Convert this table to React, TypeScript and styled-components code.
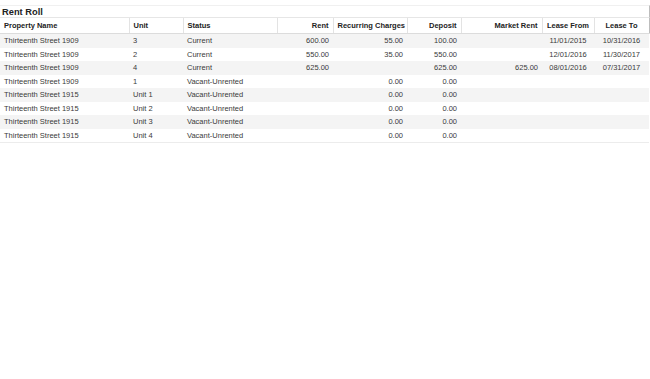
import React from 'react'
import styled, { createGlobalStyle } from 'styled-components'

const GlobalStyle = createGlobalStyle`
    html, body {
        margin: 0;
        padding: 0;
        background: #fff;
    }
    body {
        font-family: 'Liberation Sans', Arial, Helvetica, sans-serif;
        color: #333;
    }
`

const Page = styled.div`
    width: 650px;
    height: 379px;
    padding-top: 5px;
    box-sizing: border-box;
`

const TitleBar = styled.div`
    border-top: 1px solid #f0f0f0;
    border-bottom: 1px solid #e6e6e6;
    border-right: 1px solid #bdbdbd;
    width: 647px;
    height: 11px;
    padding-left: 2px;
    display: flex;
    align-items: center;
`

const Title = styled.h1`
    margin: 0;
    font-size: 9.3px;
    font-weight: bold;
    color: #222;
    line-height: 10px;
`

const Grid = styled.table`
    border-collapse: collapse;
    table-layout: fixed;
    width: 649px;
    font-size: 7.5px;
`

const HeadCell = styled.th<{ $align?: string }>`
    height: 15px;
    padding: 0 4px;
    font-weight: bold;
    color: #222;
    text-align: ${p => p.$align || 'left'};
    border-right: 1px solid #e3e3e3;
    border-bottom: 1px solid #dcdcdc;
    white-space: nowrap;
    overflow: hidden;
    &:last-child {
        border-right: 1px solid #bdbdbd;
    }
`

const Row = styled.tr<{ $shade: boolean }>`
    background: ${p => (p.$shade ? '#f4f4f4' : '#fff')};
    &:last-child td {
        border-bottom: 1px solid #ececec;
    }
`

const Cell = styled.td<{ $align?: string }>`
    height: 13.5px;
    padding: 0 4px;
    color: #3a3a3a;
    text-align: ${p => p.$align || 'left'};
    white-space: nowrap;
    overflow: hidden;
`

const columns = [
    { key: 'property', label: 'Property Name', width: 129, align: 'left' },
    { key: 'unit', label: 'Unit', width: 54, align: 'left' },
    { key: 'status', label: 'Status', width: 94, align: 'left' },
    { key: 'rent', label: 'Rent', width: 56, align: 'right' },
    { key: 'recurring', label: 'Recurring Charges', width: 74, align: 'right' },
    { key: 'deposit', label: 'Deposit', width: 54, align: 'right' },
    { key: 'market', label: 'Market Rent', width: 81, align: 'right' },
    { key: 'from', label: 'Lease From', width: 52, align: 'center' },
    { key: 'to', label: 'Lease To', width: 55, align: 'center' },
]

const rows: any[] = [
    { property: 'Thirteenth Street 1909', unit: '3', status: 'Current', rent: '600.00', recurring: '55.00', deposit: '100.00', market: '', from: '11/01/2015', to: '10/31/2016' },
    { property: 'Thirteenth Street 1909', unit: '2', status: 'Current', rent: '550.00', recurring: '35.00', deposit: '550.00', market: '', from: '12/01/2016', to: '11/30/2017' },
    { property: 'Thirteenth Street 1909', unit: '4', status: 'Current', rent: '625.00', recurring: '', deposit: '625.00', market: '625.00', from: '08/01/2016', to: '07/31/2017' },
    { property: 'Thirteenth Street 1909', unit: '1', status: 'Vacant-Unrented', rent: '', recurring: '0.00', deposit: '0.00', market: '', from: '', to: '' },
    { property: 'Thirteenth Street 1915', unit: 'Unit 1', status: 'Vacant-Unrented', rent: '', recurring: '0.00', deposit: '0.00', market: '', from: '', to: '' },
    { property: 'Thirteenth Street 1915', unit: 'Unit 2', status: 'Vacant-Unrented', rent: '', recurring: '0.00', deposit: '0.00', market: '', from: '', to: '' },
    { property: 'Thirteenth Street 1915', unit: 'Unit 3', status: 'Vacant-Unrented', rent: '', recurring: '0.00', deposit: '0.00', market: '', from: '', to: '' },
    { property: 'Thirteenth Street 1915', unit: 'Unit 4', status: 'Vacant-Unrented', rent: '', recurring: '0.00', deposit: '0.00', market: '', from: '', to: '' },
]

const App: React.FunctionComponent = () => {
    return (
        <Page>
            <GlobalStyle />
            <TitleBar>
                <Title>Rent Roll</Title>
            </TitleBar>
            <Grid>
                <colgroup>
                    {columns.map(c => <col key={c.key} style={{ width: c.width }} />)}
                </colgroup>
                <thead>
                    <tr>
                        {columns.map(c => <HeadCell key={c.key} $align={c.align}>{c.label}</HeadCell>)}
                    </tr>
                </thead>
                <tbody>
                    {rows.map((r, i) => (
                        <Row key={i} $shade={i % 2 === 0}>
                            {columns.map(c => <Cell key={c.key} $align={c.align}>{r[c.key]}</Cell>)}
                        </Row>
                    ))}
                </tbody>
            </Grid>
        </Page>
    )
}

export default App
